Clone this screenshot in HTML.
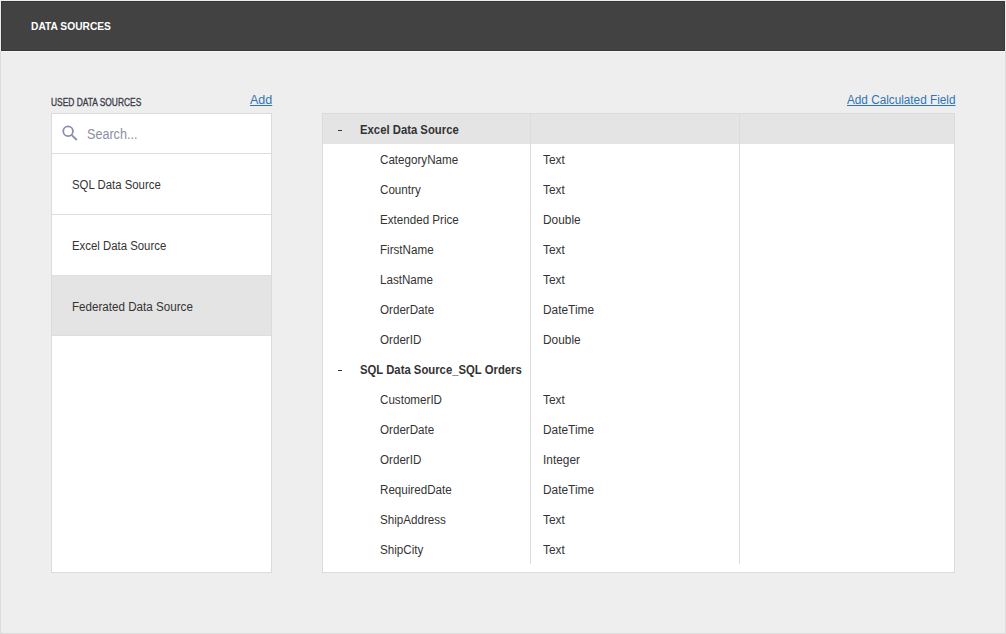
<!DOCTYPE html>
<html>
<head>
<meta charset="utf-8">
<style>
html, body { margin:0; padding:0; }
body { width:1006px; height:634px; position:relative; overflow:hidden; background:#ececec; font-family:"Liberation Sans", sans-serif; }
.abs { position:absolute; }
.t { position:absolute; white-space:nowrap; transform-origin:0 0; line-height:1; }
#frame { left:0; top:51px; width:1004px; height:582px; border:1px solid #dcdcdc; border-top:none; background:#eeeeee; }
#frame2 { left:1px; top:51px; width:1004px; height:1px; background:#f6f6f6; }
#hdr { left:1px; top:1px; width:1002px; height:48px; background:#424242; border:1px solid #373737; }
.panel { background:#fff; border:1px solid #dbdbdb; box-sizing:border-box; }
.link { color:#2f74b6; text-decoration:underline; }
</style>
</head>
<body>
<div id="frame" class="abs"></div>
<div id="frame2" class="abs"></div>
<div id="hdr" class="abs"></div>
<div class="t" style="left:31px;top:20.5px;font-size:11px;font-weight:bold;color:#ffffff;transform:scaleX(0.93);">DATA SOURCES</div>
<div class="t" style="left:51px;top:98px;font-size:10px;font-weight:normal;color:#3b3b47;transform:scaleX(0.84);-webkit-text-stroke:0.3px #3b3b47;">USED DATA SOURCES</div>
<div class="t" style="left:250px;top:94px;font-size:12.5px;font-weight:normal;color:#2f74b6;transform:scaleX(1.0);"><span class="link">Add</span></div>
<div class="abs panel" style="left:51px;top:113px;width:221px;height:460px;"></div>
<svg class="abs" style="left:60px;top:123px" width="20" height="20" viewBox="0 0 20 20">
<circle cx="8.1" cy="8.3" r="4.85" fill="none" stroke="#8a8fad" stroke-width="1.8"/>
<line x1="11.3" y1="11.6" x2="16.8" y2="17" stroke="#8a8fad" stroke-width="1.9"/>
</svg>
<div class="t" style="left:87px;top:127px;font-size:14px;font-weight:normal;color:#8c8fa3;transform:scaleX(0.9);">Search...</div>
<div class="abs" style="left:52px;top:153px;width:219px;height:1px;background:#dedede"></div>
<div class="abs" style="left:52px;top:154px;width:219px;height:60px;background:#fff;border-bottom:1px solid #dedede"></div>
<div class="t" style="left:72px;top:179px;font-size:12.5px;font-weight:normal;color:#333333;transform:scaleX(0.91);">SQL Data Source</div>
<div class="abs" style="left:52px;top:215px;width:219px;height:60px;background:#fff;border-bottom:1px solid #dedede"></div>
<div class="t" style="left:72px;top:240px;font-size:12.5px;font-weight:normal;color:#333333;transform:scaleX(0.91);">Excel Data Source</div>
<div class="abs" style="left:52px;top:276px;width:219px;height:59px;background:#e4e4e4;border-bottom:1px solid #dedede"></div>
<div class="t" style="left:72px;top:301px;font-size:12.5px;font-weight:normal;color:#333333;transform:scaleX(0.93);">Federated Data Source</div>
<div class="t" style="left:846.5px;top:94px;font-size:12.5px;font-weight:normal;color:#2f74b6;transform:scaleX(0.94);"><span class="link">Add Calculated Field</span></div>
<div class="abs panel" style="left:322px;top:113px;width:633px;height:460px;"></div>
<div class="abs" style="left:323px;top:114px;width:631px;height:30px;background:#e4e4e4"></div>
<div class="abs" style="left:530px;top:114px;width:1px;height:450px;background:#dcdcdc"></div>
<div class="abs" style="left:739px;top:114px;width:1px;height:450px;background:#dcdcdc"></div>
<div class="abs" style="left:338px;top:130px;width:4px;height:1px;background:#333"></div>
<div class="t" style="left:360px;top:123.5px;font-size:12.5px;font-weight:bold;color:#333333;transform:scaleX(0.905);">Excel Data Source</div>
<div class="t" style="left:380px;top:153.5px;font-size:12.5px;font-weight:normal;color:#333333;transform:scaleX(0.93);">CategoryName</div>
<div class="t" style="left:543px;top:153.5px;font-size:12.5px;font-weight:normal;color:#333333;transform:scaleX(0.95);">Text</div>
<div class="t" style="left:380px;top:183.5px;font-size:12.5px;font-weight:normal;color:#333333;transform:scaleX(0.93);">Country</div>
<div class="t" style="left:543px;top:183.5px;font-size:12.5px;font-weight:normal;color:#333333;transform:scaleX(0.95);">Text</div>
<div class="t" style="left:380px;top:213.5px;font-size:12.5px;font-weight:normal;color:#333333;transform:scaleX(0.93);">Extended Price</div>
<div class="t" style="left:543px;top:213.5px;font-size:12.5px;font-weight:normal;color:#333333;transform:scaleX(0.95);">Double</div>
<div class="t" style="left:380px;top:243.5px;font-size:12.5px;font-weight:normal;color:#333333;transform:scaleX(0.93);">FirstName</div>
<div class="t" style="left:543px;top:243.5px;font-size:12.5px;font-weight:normal;color:#333333;transform:scaleX(0.95);">Text</div>
<div class="t" style="left:380px;top:273.5px;font-size:12.5px;font-weight:normal;color:#333333;transform:scaleX(0.93);">LastName</div>
<div class="t" style="left:543px;top:273.5px;font-size:12.5px;font-weight:normal;color:#333333;transform:scaleX(0.95);">Text</div>
<div class="t" style="left:380px;top:303.5px;font-size:12.5px;font-weight:normal;color:#333333;transform:scaleX(0.93);">OrderDate</div>
<div class="t" style="left:543px;top:303.5px;font-size:12.5px;font-weight:normal;color:#333333;transform:scaleX(0.95);">DateTime</div>
<div class="t" style="left:380px;top:333.5px;font-size:12.5px;font-weight:normal;color:#333333;transform:scaleX(0.93);">OrderID</div>
<div class="t" style="left:543px;top:333.5px;font-size:12.5px;font-weight:normal;color:#333333;transform:scaleX(0.95);">Double</div>
<div class="abs" style="left:338px;top:370px;width:4px;height:1px;background:#333"></div>
<div class="t" style="left:360px;top:363.5px;font-size:12.5px;font-weight:bold;color:#333333;transform:scaleX(0.905);">SQL Data Source_SQL Orders</div>
<div class="t" style="left:380px;top:393.5px;font-size:12.5px;font-weight:normal;color:#333333;transform:scaleX(0.93);">CustomerID</div>
<div class="t" style="left:543px;top:393.5px;font-size:12.5px;font-weight:normal;color:#333333;transform:scaleX(0.95);">Text</div>
<div class="t" style="left:380px;top:423.5px;font-size:12.5px;font-weight:normal;color:#333333;transform:scaleX(0.93);">OrderDate</div>
<div class="t" style="left:543px;top:423.5px;font-size:12.5px;font-weight:normal;color:#333333;transform:scaleX(0.95);">DateTime</div>
<div class="t" style="left:380px;top:453.5px;font-size:12.5px;font-weight:normal;color:#333333;transform:scaleX(0.93);">OrderID</div>
<div class="t" style="left:543px;top:453.5px;font-size:12.5px;font-weight:normal;color:#333333;transform:scaleX(0.95);">Integer</div>
<div class="t" style="left:380px;top:483.5px;font-size:12.5px;font-weight:normal;color:#333333;transform:scaleX(0.93);">RequiredDate</div>
<div class="t" style="left:543px;top:483.5px;font-size:12.5px;font-weight:normal;color:#333333;transform:scaleX(0.95);">DateTime</div>
<div class="t" style="left:380px;top:513.5px;font-size:12.5px;font-weight:normal;color:#333333;transform:scaleX(0.93);">ShipAddress</div>
<div class="t" style="left:543px;top:513.5px;font-size:12.5px;font-weight:normal;color:#333333;transform:scaleX(0.95);">Text</div>
<div class="t" style="left:380px;top:543.5px;font-size:12.5px;font-weight:normal;color:#333333;transform:scaleX(0.93);">ShipCity</div>
<div class="t" style="left:543px;top:543.5px;font-size:12.5px;font-weight:normal;color:#333333;transform:scaleX(0.95);">Text</div>
</body>
</html>
